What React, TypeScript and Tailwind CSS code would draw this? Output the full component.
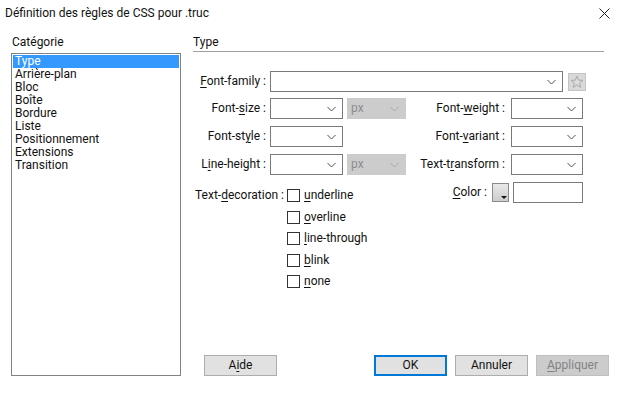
import React from 'react';

const Chevron: React.FC<{ light?: boolean }> = ({ light }) => (
  <svg width="9" height="6" viewBox="0 0 9 6" className="shrink-0">
    <path d="M0.5 1 L4.5 5 L8.5 1" fill="none" stroke={light ? '#a8a8a8' : '#505050'} strokeWidth="1" />
  </svg>
);

const Select: React.FC<{ w: string; disabled?: boolean; text?: string }> = ({ w, disabled, text }) => (
  <div
    className={`${w} h-[21px] flex items-center justify-between pl-[3px] pr-[6px] border ${
      disabled ? 'bg-[#cccccc] border-[#cccccc] text-[#8c8c8c]' : 'bg-white border-[#7a7a7a]'
    }`}
  >
    <span>{text}</span>
    <Chevron light={disabled} />
  </div>
);

// label with one underlined accelerator letter
const Acc: React.FC<{ pre: string; k: string; post: string }> = ({ pre, k, post }) => (
  <span className="whitespace-nowrap">
    {pre}
    <span className="underline underline-offset-2">{k}</span>
    {post}
  </span>
);

const Checkbox: React.FC<{ children: React.ReactNode }> = ({ children }) => (
  <div className="flex items-center h-[13px] gap-[4px]">
    <div className="w-[13px] h-[13px] border border-[#333333] bg-white" />
    {children}
  </div>
);

const categories = ['Type', 'Arrière-plan', 'Bloc', 'Boîte', 'Bordure', 'Liste', 'Positionnement', 'Extensions', 'Transition'];

const App: React.FC = () => {
  return (
    <div
      className="w-[619px] h-[396px] bg-white text-[12px] leading-[13px] text-[#111] flex flex-col overflow-hidden"
      style={{ fontFamily: 'Roboto, "Liberation Sans", sans-serif' }}
    >
      {/* Title bar */}
      <div className="h-[25px] flex items-center justify-between pl-[5px] pr-[9px] pt-[1px]">
        <span className="text-[12px]">Définition des règles de CSS pour .truc</span>
        <svg width="11" height="11" viewBox="0 0 11 11">
          <path d="M0.5 0.5 L10.5 10.5 M10.5 0.5 L0.5 10.5" stroke="#222" strokeWidth="1" />
        </svg>
      </div>

      <div className="flex pl-[11px] pt-[11px]">
        {/* Category list */}
        <div className="w-[170px] flex flex-col">
          <div className="pl-[1px] h-[17px]">Catégorie</div>
          <div className="h-[323px] border border-[#828282] p-[1px]">
            {categories.map((c, i) => (
              <div
                key={c}
                className={`h-[13px] pl-[2px] leading-[13px] ${i === 0 ? 'bg-[#3399ff] text-white' : ''}`}
              >
                {c}
              </div>
            ))}
          </div>
        </div>

        {/* Type panel */}
        <div className="ml-[12px] w-[411px] flex flex-col">
          <div className="h-[15px] leading-[13px]">Type</div>
          <div className="h-px bg-[#a0a0a0]" />

          <div className="flex flex-col mt-[19px]">
            {/* Font-family */}
            <div className="flex items-center h-[21px]">
              <div className="w-[73px] text-right">
                <Acc pre="" k="F" post="ont-family :" />
              </div>
              <div className="ml-[4px] w-[293px] h-[21px] border border-[#7a7a7a] flex items-center justify-end pr-[6px]">
                <Chevron />
              </div>
              <div className="ml-[5px] w-[18px] h-[18px] bg-[#d9d9d9] border border-[#c4c4c4] flex items-center justify-center">
                <svg width="14" height="14" viewBox="0 0 14 14">
                  <path
                    d="M7 1 L8.6 5.2 L13 5.3 L9.5 8 L10.8 12.4 L7 9.8 L3.2 12.4 L4.5 8 L1 5.3 L5.4 5.2 Z"
                    fill="#dcdcdc"
                    stroke="#a6a6a6"
                    strokeWidth="0.9"
                  />
                </svg>
              </div>
            </div>

            {/* Font-size / Font-weight */}
            <div className="flex items-center h-[21px] mt-[6px]">
              <div className="w-[73px] text-right">
                <Acc pre="Font-" k="s" post="ize :" />
              </div>
              <div className="ml-[4px]"><Select w="w-[73px]" /></div>
              <div className="ml-[4px]"><Select w="w-[59px]" disabled text="px" /></div>
              <div className="flex-1 text-right pr-[6px]">
                <Acc pre="Font-" k="w" post="eight :" />
              </div>
              <Select w="w-[72px]" />
              <div className="w-[21px]" />
            </div>

            {/* Font-style / Font-variant */}
            <div className="flex items-center h-[21px] mt-[7px]">
              <div className="w-[73px] text-right">
                <Acc pre="Font-st" k="y" post="le :" />
              </div>
              <div className="ml-[4px]"><Select w="w-[73px]" /></div>
              <div className="ml-[4px] w-[59px]" />
              <div className="flex-1 text-right pr-[6px]">
                <Acc pre="Font-" k="v" post="ariant :" />
              </div>
              <Select w="w-[72px]" />
              <div className="w-[21px]" />
            </div>

            {/* Line-height / Text-transform */}
            <div className="flex items-center h-[21px] mt-[7px]">
              <div className="w-[73px] text-right">
                <Acc pre="L" k="i" post="ne-height :" />
              </div>
              <div className="ml-[4px]"><Select w="w-[73px]" /></div>
              <div className="ml-[4px]"><Select w="w-[59px]" disabled text="px" /></div>
              <div className="flex-1 text-right pr-[6px]">
                <Acc pre="Text-t" k="r" post="ansform :" />
              </div>
              <Select w="w-[72px]" />
              <div className="w-[21px]" />
            </div>

            {/* Text-decoration / Color */}
            <div className="flex items-start mt-[7px]">
              <div className="flex pt-[7px]">
                <div className="w-[91px] text-right">
                  <Acc pre="Text-" k="d" post="ecoration :" />
                </div>
                <div className="flex flex-col gap-[8.5px] ml-[3px]">
                  <Checkbox><Acc pre="" k="u" post="nderline" /></Checkbox>
                  <Checkbox><Acc pre="" k="o" post="verline" /></Checkbox>
                  <Checkbox><Acc pre="" k="l" post="ine-through" /></Checkbox>
                  <Checkbox><Acc pre="" k="b" post="link" /></Checkbox>
                  <Checkbox><Acc pre="" k="n" post="one" /></Checkbox>
                </div>
              </div>
              <div className="flex-1 flex items-center justify-end h-[21px]">
                <Acc pre="" k="C" post="olor :" />
                <div className="ml-[5px] w-[17px] h-[19px] border border-[#8a8a8a] bg-gradient-to-b from-[#e8e8e8] to-[#cdcdcd] relative">
                  <svg width="6" height="3" viewBox="0 0 6 3" className="absolute right-[1px] bottom-[2px]">
                    <path d="M0 0 L6 0 L3 3 Z" fill="#111" />
                  </svg>
                </div>
                <div className="ml-[4px] w-[70px] h-[21px] border border-[#7a7a7a] bg-white" />
                <div className="w-[21px]" />
              </div>
            </div>
          </div>
        </div>
      </div>

      {/* Buttons */}
      <div className="flex items-center mt-[-21px] pl-[204px]">
        <button className="w-[73px] h-[21px] bg-[#e1e1e1] border border-[#adadad]">
          <Acc pre="A" k="i" post="de" />
        </button>
        <button className="ml-[97px] w-[73px] h-[21px] bg-[#e1e1e1] border-2 border-[#0078d7]">OK</button>
        <button className="ml-[8px] w-[73px] h-[21px] bg-[#e1e1e1] border border-[#adadad]">Annuler</button>
        <button className="ml-[8px] w-[73px] h-[21px] bg-[#cccccc] border border-[#bfbfbf] text-[#838383]">
          <Acc pre="" k="A" post="ppliquer" />
        </button>
      </div>
    </div>
  );
};

export default App;
